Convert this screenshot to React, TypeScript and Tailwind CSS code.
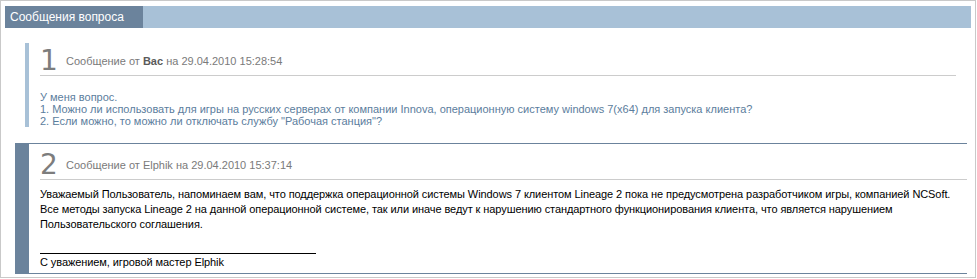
const font = { fontFamily: '"Liberation Sans", Arial, sans-serif' };

function MessageHeader({ num, author, bold, date }: { num: string; author: string; bold?: boolean; date: string }) {
  return (
    <div className="flex items-center border-b border-[#cccccc]">
      <span className="w-[26px] text-[28px] leading-none text-[#7d7d7d]" style={{ fontFamily: '"DejaVu Sans", sans-serif' }}>
        {num}
      </span>
      <span className="text-[11px] text-[#7a7a7a]">
        Сообщение от{" "}
        {bold ? <b className="text-[#5a5a5a]">{author}</b> : author} на {date}
      </span>
    </div>
  );
}

export default function App() {
  return (
    <div className="bg-white" style={font}>
      <div className="w-[976px] h-[278px] border border-[#c9c9c9] pt-[5px] pl-[4px] pr-[4px]">
        <div className="flex h-[22px]">
          <div className="w-[138px] bg-[#6b839c] pl-[5px] text-[12px] leading-[22px] text-white">Сообщения вопроса</div>
          <div className="flex-1 bg-[#a8c1d7]" />
        </div>

        <div className="mt-[15px] ml-[20px] mr-[15px] flex h-[84px]">
          <div className="w-[4px] bg-[#a8c1d7]" />
          <div className="flex-1 pl-[11px]">
            <div className="h-[37px] pt-[4px]">
              <MessageHeader num="1" author="Вас" bold date="29.04.2010 15:28:54" />
            </div>
            <div className="pt-[11px] text-[11px] leading-[12px] text-[#5b7d9d]">
              <p>У меня вопрос.</p>
              <p>1. Можно ли использовать для игры на русских серверах от компании Innova, операционную систему windows 7(x64) для запуска клиента?</p>
              <p>2. Если можно, то можно ли отключать службу "Рабочая станция"?</p>
            </div>
          </div>
        </div>

        <div className="mt-[16px] ml-[10px] mr-[4px] flex h-[131px] border-y border-[#6b839c]">
          <div className="w-[14px] bg-[#6b839c]" />
          <div className="flex-1 pl-[11px]">
            <div className="h-[36px] pt-[7px]">
              <MessageHeader num="2" author="Elphik" date="29.04.2010 15:37:14" />
            </div>
            <div className="pt-[7px] text-[11px] leading-[15px] tracking-[-0.08px] text-black">
              <p>
                Уважаемый Пользователь, напоминаем вам, что поддержка операционной системы Windows 7 клиентом Lineage 2 пока не предусмотрена разработчиком игры, компанией NCSoft.
              </p>
              <p>
                Все методы запуска Lineage 2 на данной операционной системе, так или иначе ведут к нарушению стандартного функционирования клиента, что является нарушением Пользовательского соглашения.
              </p>
              <div className="mt-[21px] w-[276px] border-b border-black" />
              <p className="pt-[1px]">С уважением, игровой мастер Elphik</p>
            </div>
          </div>
        </div>
      </div>
    </div>
  );
}
